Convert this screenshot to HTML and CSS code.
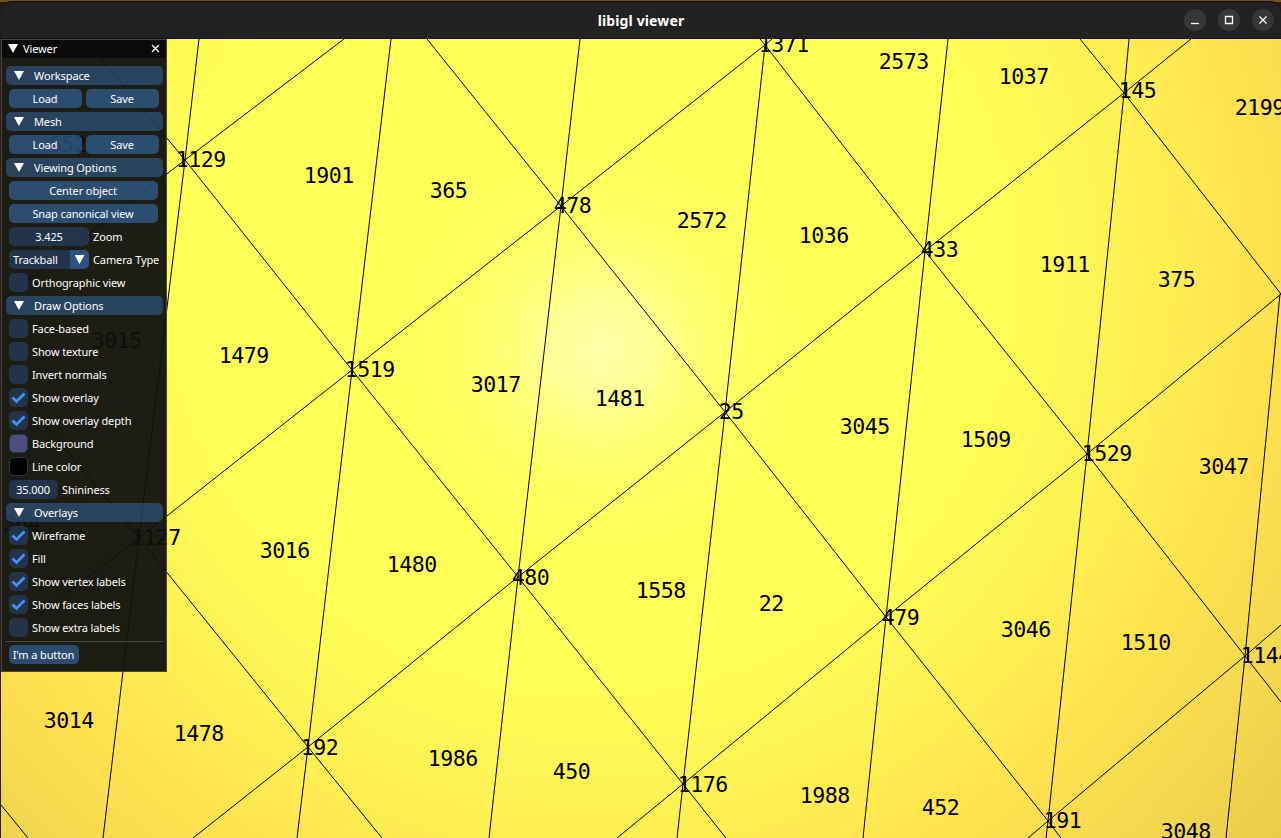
FILE: index.html
```
<!DOCTYPE html>
<html lang="en">
<head>
<meta charset="utf-8">
<title>libigl viewer</title>
<link rel="stylesheet" href="styles.css">
</head>
<body>
<div class="window">
  <header class="titlebar">
    <h1 class="title">libigl viewer</h1>
    <div class="controls">
      <span class="control"><svg width="22" height="22"><path d="M7 14.5h8"/></svg></span>
      <span class="control"><svg width="22" height="22"><path d="M7.5 7.5h7v7h-7z"/></svg></span>
      <span class="control"><svg width="22" height="22"><path d="M7.5 7.5l7 7m0-7l-7 7"/></svg></span>
    </div>
  </header>
  <main class="viewport">
    <svg class="scene" viewBox="1 39 1280 799" width="1280" height="799">
      <g class="edges">
        <path d="M199 39L185 160L139 538L103 838M391 39L352 370L308 747L297 838M580 39L561 206L518 577L489 838M765 45L725 412L683 784L677 838M948 39L925 251L886 617L863 838M1129 39L1124 93L1087 454L1048 821L1046 838M1280 294L1245 656L1226 838"/>
        <path d="M85 39L185 160L352 370L518 577L683 784L726 838M427 39L561 206L725 412L886 617L1048 821L1061 838M760 39L765 45L925 251L1087 454L1245 656L1281 702M1080 39L1124 93L1281 294M0 370L139 538L308 747L382 838M1 805L28 838"/>
        <path d="M344 39L185 160L0 302M772 39L765 45L561 206L352 370L139 538L0 645M1191 39L1124 93L925 251L725 412L518 577L308 747L193 838M1281 294L1087 454L886 617L683 784L617 838M1281 625L1245 656L1048 821L1028 838"/>
      </g>
      <g class="labels" transform="translate(.8 0)">
        <text x="758" y="52">1371</text><text x="878" y="69">2573</text><text x="998" y="84">1037</text><text x="1118" y="98">145</text><text x="1234" y="115">2199</text>
        <text x="175" y="167">1129</text><text x="303" y="183">1901</text><text x="429" y="198">365</text><text x="553" y="213">478</text><text x="676" y="228">2572</text><text x="798" y="243">1036</text><text x="920" y="257">433</text><text x="1039" y="272">1911</text><text x="1157" y="287">375</text>
        <text x="91" y="348">3015</text><text x="218" y="363">1479</text><text x="344" y="377">1519</text><text x="470" y="392">3017</text><text x="594" y="406">1481</text><text x="718" y="419">25</text><text x="839" y="434">3045</text><text x="960" y="447">1509</text><text x="1081" y="461">1529</text><text x="1198" y="474">3047</text>
        <text x="48" y="152">652</text><text x="2" y="531">364</text><text x="130" y="545">1127</text><text x="259" y="558">3016</text><text x="386" y="572">1480</text><text x="511" y="585">480</text><text x="635" y="598">1558</text><text x="758" y="611">22</text><text x="881" y="625">479</text><text x="1000" y="637">3046</text><text x="1120" y="650">1510</text><text x="1240" y="663">1144</text>
        <text x="43" y="728">3014</text><text x="173" y="741">1478</text><text x="300" y="755">192</text><text x="427" y="766">1986</text><text x="552" y="779">450</text><text x="677" y="792">1176</text><text x="799" y="803">1988</text><text x="921" y="815">452</text><text x="1043" y="828">191</text><text x="1160" y="839">3048</text>
      </g>
    </svg>
    <aside class="panel">
      <div class="panel-title"><i class="arrow"></i><span>Viewer</span><svg class="close" width="9" height="9"><path d="M1 1l7 7m0-7l-7 7"/></svg></div>
      <div class="panel-body">
        <div class="section"><i class="arrow"></i>Workspace</div>
        <div class="row split"><button>Load</button><button>Save</button></div>
        <div class="section"><i class="arrow"></i>Mesh</div>
        <div class="row split"><button>Load</button><button>Save</button></div>
        <div class="section"><i class="arrow"></i>Viewing Options</div>
        <div class="row"><button class="wide">Center object</button></div>
        <div class="row"><button class="wide">Snap canonical view</button></div>
        <div class="row"><span class="field zoom">3.425</span><span>Zoom</span></div>
        <div class="row"><span class="field combo">Trackball<b><i class="arrow"></i></b></span><span>Camera Type</span></div>
        <div class="row"><span class="box"></span><span>Orthographic view</span></div>
        <div class="section"><i class="arrow"></i>Draw Options</div>
        <div class="row"><span class="box"></span><span>Face-based</span></div>
        <div class="row"><span class="box"></span><span>Show texture</span></div>
        <div class="row"><span class="box"></span><span>Invert normals</span></div>
        <div class="row"><span class="box"><svg width="19" height="19"><path d="M3.5 9.5l4 4l8-8"/></svg></span><span>Show overlay</span></div>
        <div class="row"><span class="box"><svg width="19" height="19"><path d="M3.5 9.5l4 4l8-8"/></svg></span><span>Show overlay depth</span></div>
        <div class="row"><span class="box swatch purple"></span><span>Background</span></div>
        <div class="row"><span class="box swatch black"></span><span>Line color</span></div>
        <div class="row"><span class="field shine">35.000</span><span>Shininess</span></div>
        <div class="section"><i class="arrow"></i>Overlays</div>
        <div class="row"><span class="box"><svg width="19" height="19"><path d="M3.5 9.5l4 4l8-8"/></svg></span><span>Wireframe</span></div>
        <div class="row"><span class="box"><svg width="19" height="19"><path d="M3.5 9.5l4 4l8-8"/></svg></span><span>Fill</span></div>
        <div class="row"><span class="box"><svg width="19" height="19"><path d="M3.5 9.5l4 4l8-8"/></svg></span><span>Show vertex labels</span></div>
        <div class="row"><span class="box"><svg width="19" height="19"><path d="M3.5 9.5l4 4l8-8"/></svg></span><span>Show faces labels</span></div>
        <div class="row"><span class="box"></span><span>Show extra labels</span></div>
        <hr>
        <div class="row"><button class="small">I'm a button</button></div>
      </div>
    </aside>
  </main>
</div>
</body>
</html>
```
FILE: styles.css
```
* { box-sizing: border-box; }
body { margin: 0; width: 1281px; height: 838px; overflow: hidden; background: linear-gradient(#76501f 0 2px, #2a1c13 2px); }
.window { display: flex; flex-direction: column; height: 838px; padding: 1px 0 0 1px; }
.titlebar { height: 38px; display: grid; grid-template-columns: 1fr auto 1fr; align-items: center; background: #222; border-top: 1px solid #111; border-bottom: 1px solid #111; border-radius: 11px 11px 0 0; }
.title { grid-column: 2; margin: 0; color: #fff; font: bold 14px "Noto Sans", sans-serif; letter-spacing: .13px; }
.controls { display: flex; justify-content: flex-end; gap: 12px; padding-right: 7px; }
.control { width: 22px; height: 22px; border-radius: 50%; background: #373737; }
.control svg { display: block; fill: none; stroke: #fff; stroke-width: 1.3; }
.viewport { position: relative; width: 1280px; height: 799px; overflow: hidden;
  background:
    radial-gradient(circle at 600px 311px, rgba(255,255,255,.5) 0, rgba(255,255,255,.39) 45px, rgba(255,255,255,.18) 95px, rgba(255,255,255,.06) 145px, transparent 220px),
    radial-gradient(circle at 589px 231px, #ffff57 0, #ffff57 400px, #fff153 540px, #ffe14f 680px, #f4d84e 780px, #e8cc4b 900px); }
.scene { display: block; }
.edges { fill: none; stroke: #000; stroke-width: 1; }
.labels { font: 21.6px "DejaVu Sans Mono", monospace; letter-spacing: -.55px; fill: #000; }
.panel { position: absolute; left: 0; top: 0; width: 166px; height: 633px; border: 1px solid #484848; background: rgba(15,15,15,.94); color: #fff; font: 11px/19px "Noto Sans", sans-serif; letter-spacing: -.12px; }
.panel-title { height: 18px; display: flex; align-items: center; gap: 5px; padding: 0 6px 1px 6px; background: #0a0a0a; }
.close { margin-left: auto; stroke: #fff; stroke-width: 1.3; }
.arrow { display: block; width: 10px; height: 9px; background: #fff; clip-path: polygon(0 0, 100% 0, 50% 100%); }
.panel-body { display: flex; flex-direction: column; gap: 4px; padding: 8px 3px 0 4px; }
.section { height: 19px; display: flex; align-items: center; gap: 10px; padding-left: 8px; border-radius: 5px; background: rgba(66,150,250,.33); }
.row { height: 19px; display: flex; align-items: center; gap: 4px; padding-left: 3px; white-space: nowrap; }
button { width: 73px; height: 19px; padding: 0 1px 0 0; border: 0; border-radius: 5px; background: rgba(66,150,250,.4); color: #fff; font: inherit; letter-spacing: inherit; text-align: center; }
.wide { width: 149px; }
.small { width: 70px; }
.field { height: 19px; border-radius: 5px; background: rgba(41,74,122,.54); text-align: center; overflow: hidden; }
.zoom, .combo { width: 80px; }
.combo { display: flex; justify-content: space-between; padding-left: 4px; }
.combo b { width: 19px; display: grid; place-items: center; background: rgba(66,150,250,.3); }
.shine { width: 49px; padding-right: 1px; }
.box { width: 19px; height: 19px; border-radius: 5px; background: rgba(41,74,122,.54); }
.box svg { display: block; fill: none; stroke: #4296fa; stroke-width: 2.6; }
.swatch { border: 1px solid #23384d; }
.purple { background: #4d4d80; }
.black { background: #000; }
hr { width: 158px; height: 1px; margin: 0 0 -1px -1px; border: 0; background: #484848; }
```
